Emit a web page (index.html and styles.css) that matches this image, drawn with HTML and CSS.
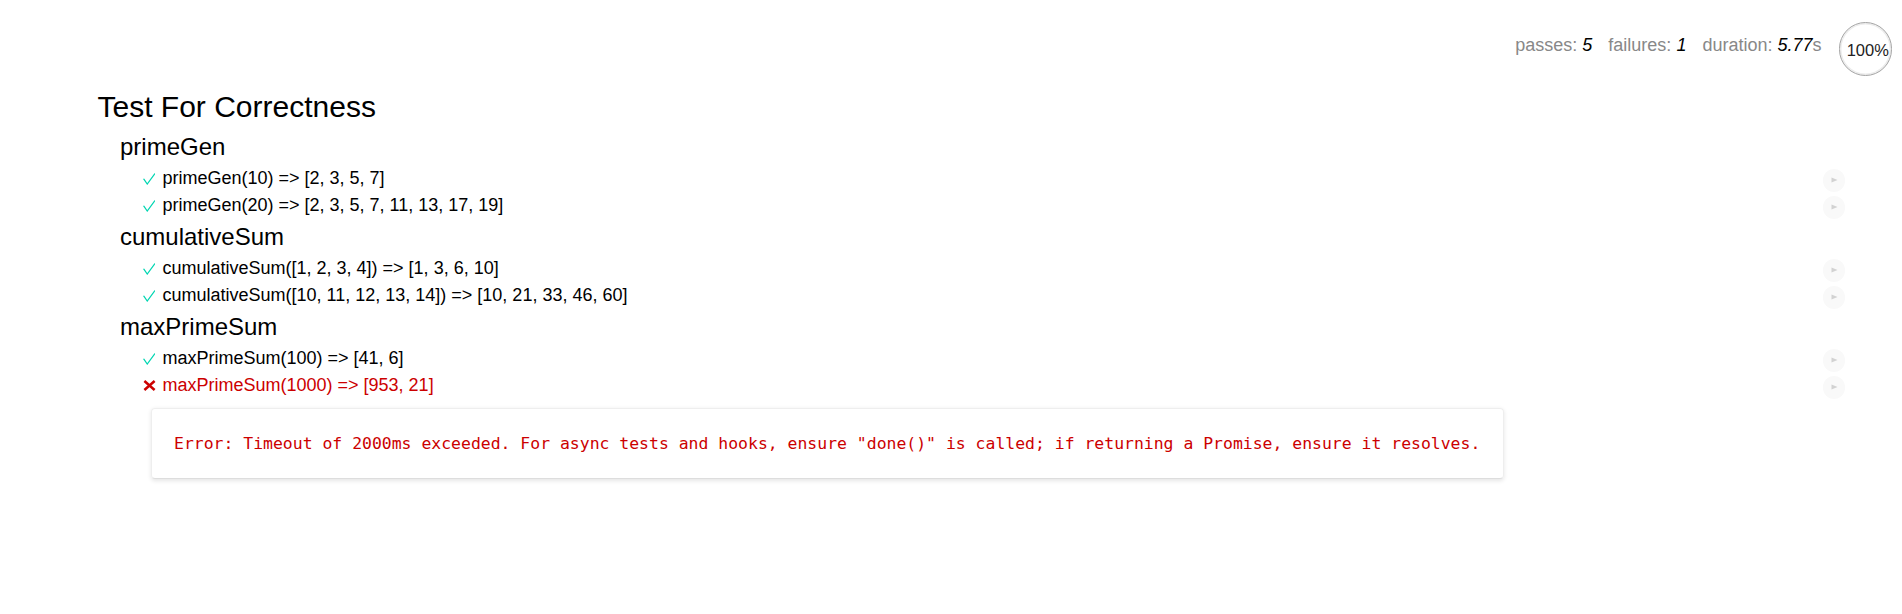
FILE: index.html
```html
<!DOCTYPE html>
<html lang="en">
<head>
<meta charset="utf-8">
<title>Mocha Tests</title>
<link rel="stylesheet" href="styles.css">
</head>
<body>
<div class="page">
  <header class="stats">
    <ul class="stat-list">
      <li class="stat">passes: <em>5</em></li>
      <li class="stat">failures: <em>1</em></li>
      <li class="stat">duration: <em>5.77</em>s</li>
    </ul>
    <div class="progress"><span class="progress-text">100%</span></div>
  </header>

  <main class="report">
    <section class="suite">
      <h1 class="suite-title">Test For Correctness</h1>

      <section class="subsuite">
        <h2 class="subsuite-title">primeGen</h2>
        <ul class="tests">
          <li class="test pass">
            <div class="test-head">
              <svg class="mark check" viewBox="0 0 13 12" aria-hidden="true"><polyline points="0.9,6.2 4.4,11.2 12.2,0.7"/></svg>
              <span class="name">primeGen(10) =&gt; [2, 3, 5, 7]</span>
              <a class="replay" href="#"><svg viewBox="0 0 8 7" aria-hidden="true"><polygon points="0.5,0.5 7.5,3.5 0.5,6.5"/></svg></a>
            </div>
          </li>
          <li class="test pass">
            <div class="test-head">
              <svg class="mark check" viewBox="0 0 13 12" aria-hidden="true"><polyline points="0.9,6.2 4.4,11.2 12.2,0.7"/></svg>
              <span class="name">primeGen(20) =&gt; [2, 3, 5, 7, 11, 13, 17, 19]</span>
              <a class="replay" href="#"><svg viewBox="0 0 8 7" aria-hidden="true"><polygon points="0.5,0.5 7.5,3.5 0.5,6.5"/></svg></a>
            </div>
          </li>
        </ul>
      </section>

      <section class="subsuite">
        <h2 class="subsuite-title">cumulativeSum</h2>
        <ul class="tests">
          <li class="test pass">
            <div class="test-head">
              <svg class="mark check" viewBox="0 0 13 12" aria-hidden="true"><polyline points="0.9,6.2 4.4,11.2 12.2,0.7"/></svg>
              <span class="name">cumulativeSum([1, 2, 3, 4]) =&gt; [1, 3, 6, 10]</span>
              <a class="replay" href="#"><svg viewBox="0 0 8 7" aria-hidden="true"><polygon points="0.5,0.5 7.5,3.5 0.5,6.5"/></svg></a>
            </div>
          </li>
          <li class="test pass">
            <div class="test-head">
              <svg class="mark check" viewBox="0 0 13 12" aria-hidden="true"><polyline points="0.9,6.2 4.4,11.2 12.2,0.7"/></svg>
              <span class="name">cumulativeSum([10, 11, 12, 13, 14]) =&gt; [10, 21, 33, 46, 60]</span>
              <a class="replay" href="#"><svg viewBox="0 0 8 7" aria-hidden="true"><polygon points="0.5,0.5 7.5,3.5 0.5,6.5"/></svg></a>
            </div>
          </li>
        </ul>
      </section>

      <section class="subsuite">
        <h2 class="subsuite-title">maxPrimeSum</h2>
        <ul class="tests">
          <li class="test pass">
            <div class="test-head">
              <svg class="mark check" viewBox="0 0 13 12" aria-hidden="true"><polyline points="0.9,6.2 4.4,11.2 12.2,0.7"/></svg>
              <span class="name">maxPrimeSum(100) =&gt; [41, 6]</span>
              <a class="replay" href="#"><svg viewBox="0 0 8 7" aria-hidden="true"><polygon points="0.5,0.5 7.5,3.5 0.5,6.5"/></svg></a>
            </div>
          </li>
          <li class="test fail">
            <div class="test-head">
              <svg class="mark cross" viewBox="0 0 13 11" aria-hidden="true"><line x1="1.4" y1="1" x2="11.6" y2="10"/><line x1="11.6" y1="1" x2="1.4" y2="10"/></svg>
              <span class="name">maxPrimeSum(1000) =&gt; [953, 21]</span>
              <a class="replay" href="#"><svg viewBox="0 0 8 7" aria-hidden="true"><polygon points="0.5,0.5 7.5,3.5 0.5,6.5"/></svg></a>
            </div>
            <pre class="error">Error: Timeout of 2000ms exceeded. For async tests and hooks, ensure "done()" is called; if returning a Promise, ensure it resolves.</pre>
          </li>
        </ul>
      </section>
    </section>
  </main>
</div>
</body>
</html>
```

FILE: styles.css
```css
* {
  box-sizing: border-box;
}

html, body {
  margin: 0;
  padding: 0;
  background: #fff;
}

body {
  font-family: "Liberation Sans", Arial, Helvetica, sans-serif;
  color: #000;
}

.page {
  display: flex;
  flex-direction: column;
}

/* ---------- stats ---------- */
.stats {
  display: flex;
  justify-content: flex-end;
  align-items: flex-start;
  padding: 22px 10px 0 0;
}

.stat-list {
  display: flex;
  gap: 16px;
  margin: 0 17px 0 0;
  padding: 13px 0 0 0;
  list-style: none;
  font-size: 18px;
  line-height: 21px;
  color: #888;
}

.stat em {
  color: #000;
  font-style: italic;
}

.progress {
  width: 53.5px;
  height: 53.5px;
  border-radius: 50%;
  border: 1.5px solid #a3a3a3;
  box-shadow: inset 0 0 0 1.5px #ececec;
  display: flex;
  align-items: center;
  justify-content: center;
  padding: 2px 0 0 5px;
}

.progress-text {
  font-size: 16.5px;
  line-height: 1;
  color: #222;
}

/* ---------- report ---------- */
.report {
  padding: 8px 57px 40px 97.5px;
}

.suite-title {
  margin: 0;
  font-size: 30px;
  line-height: 45px;
  font-weight: 400;
}

.subsuite {
  margin-left: 22.5px;
}

.subsuite-title {
  margin: 0;
  font-size: 24px;
  line-height: 36px;
  font-weight: 400;
}

.tests {
  list-style: none;
  margin: 0 0 0 22.5px;
  padding: 0;
}

.test {
  display: flow-root;
}

.test-head {
  position: relative;
  display: flex;
  align-items: flex-start;
  font-size: 18px;
  line-height: 27px;
}

.mark {
  flex: none;
  width: 12.5px;
  height: 11px;
  margin-right: 7.5px;
  fill: none;
}

.check {
  height: 12px;
  margin-top: 8.5px;
  stroke: #00d6b2;
  stroke-width: 1.3;
  stroke-linecap: round;
  stroke-linejoin: miter;
}

.cross {
  width: 13px;
  margin-right: 7px;
  margin-top: 8px;
  stroke: #cc0000;
  stroke-width: 2.5;
  stroke-linecap: butt;
}

.test.fail .name {
  color: #cc0000;
}

.replay {
  position: absolute;
  top: 4.5px;
  right: 0;
  width: 22.5px;
  height: 22.5px;
  border-radius: 50%;
  background: #f9f9f9;
  display: flex;
  align-items: center;
  justify-content: center;
  text-decoration: none;
}

.replay svg {
  width: 7px;
  height: 6px;
  fill: #d2d2d2;
  margin-left: 1px;
}

.error {
  display: inline-block;
  margin: 9.5px 0 0 8px;
  padding: 21px 22.5px;
  border: 1px solid #eee;
  border-bottom-color: #ddd;
  border-radius: 4px;
  box-shadow: 0 1.5px 4.5px #e6e6e6;
  font-family: "DejaVu Sans Mono", "Liberation Mono", monospace;
  font-size: 16.45px;
  line-height: 27px;
  color: #cc0000;
  white-space: pre;
}
```
